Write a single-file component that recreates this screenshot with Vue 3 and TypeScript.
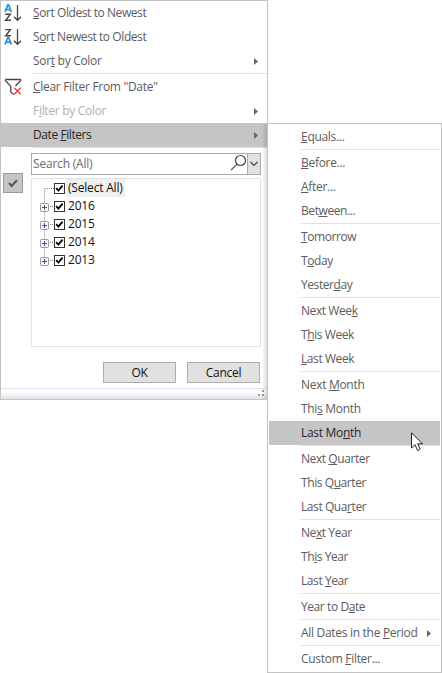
<script setup lang="ts">
interface Item {
  label: string
  at: number
  arrow?: boolean
  active?: boolean
  disabled?: boolean
  icon?: 'az' | 'za' | 'clear'
  tight?: boolean
}

// Splits a label around its access key; `at` is the index of that letter.
const parts = (i: Item): [string, string, string] => [
  i.label.slice(0, i.at),
  i.label.slice(i.at, i.at + 1),
  i.label.slice(i.at + 1),
]

const sortGroup: Item[] = [
  { label: 'Sort Oldest to Newest', at: 0, icon: 'az', tight: true },
  { label: 'Sort Newest to Oldest', at: 1, icon: 'za', tight: true },
  { label: 'Sort by Color', at: 3, arrow: true },
]
const filterGroup: Item[] = [
  { label: 'Clear Filter From "Date"', at: 0, icon: 'clear' },
  { label: 'Filter by Color', at: 1, arrow: true, disabled: true },
  { label: 'Date Filters', at: 5, arrow: true, active: true, tight: true },
]
const mainGroups: Item[][] = [sortGroup, filterGroup]

const subGroups: Item[][] = [
  [{ label: 'Equals...', at: 0 }],
  [{ label: 'Before...', at: 0 }, { label: 'After...', at: 0 }, { label: 'Between...', at: 3, tight: true }],
  [{ label: 'Tomorrow', at: 0, tight: true }, { label: 'Today', at: 1, tight: true }, { label: 'Yesterday', at: 6, tight: true }],
  [{ label: 'Next Week', at: 8, tight: true }, { label: 'This Week', at: 1, tight: true }, { label: 'Last Week', at: 0, tight: true }],
  [{ label: 'Next Month', at: 5 }, { label: 'This Month', at: 3 }, { label: 'Last Month', at: 7, active: true }],
  [{ label: 'Next Quarter', at: 5, tight: true }, { label: 'This Quarter', at: 6, tight: true }, { label: 'Last Quarter', at: 8, tight: true }],
  [{ label: 'Next Year', at: 2, tight: true }, { label: 'This Year', at: 2, tight: true }, { label: 'Last Year', at: 5, tight: true }],
  [{ label: 'Year to Date', at: 9, tight: true }],
  [{ label: 'All Dates in the Period', at: 17, arrow: true }],
  [{ label: 'Custom Filter...', at: 7 }],
]
const years: string[] = ['2016', '2015', '2014', '2013']
</script>

<template>
  <div class="stage">
    <div class="menu main">
      <div v-for="(g, gi) in mainGroups" :key="gi" class="group">
        <div v-for="i in g" :key="i.label" class="item" :class="{ active: i.active, disabled: i.disabled, tight: i.tight }">
          <span class="icon">
            <svg v-if="i.icon === 'az' || i.icon === 'za'" width="20" height="20" viewBox="0 0 20 20" fill="none">
              <g :class="i.icon === 'az' ? 'up' : 'down'">
                <path class="blue" d="M2 8.5 4.8 1.5h.8L8.4 8.5M3 6.2h4.4" />
              </g>
              <g :class="i.icon === 'az' ? 'down' : 'up'">
                <path class="ink" d="M2.3 2.2H7.4L2.6 8.3H7.9" />
              </g>
              <path class="shaft" d="M14.5 2v15M11 13.7l3.5 3.6 3.5-3.6" />
            </svg>
            <svg v-else-if="i.icon === 'clear'" width="20" height="20" viewBox="0 0 20 20" fill="none">
              <path class="funnel" d="M2.5 2.5h15v1.3l-5 5.2M2.5 2.5v1.3l5.3 5.6v5.8l3.2 2.3" />
              <path class="red" d="m11.3 10.8 6.4 6.4m0-6.4-6.4 6.4" />
            </svg>
          </span>
          <span class="label">{{ parts(i)[0] }}<u>{{ parts(i)[1] }}</u>{{ parts(i)[2] }}</span>
          <svg v-if="i.arrow" class="arrow" width="4" height="7" viewBox="0 0 4 7"><path d="M0 0 4 3.5 0 7z" /></svg>
        </div>
        <div class="rule"></div>
      </div>

      <div class="panel">
        <div class="gutter">
          <div class="toggle">
            <svg width="18" height="18" viewBox="0 0 18 18" fill="none"><path d="m5 9 2.6 3L13 6.2" /></svg>
          </div>
        </div>
        <div class="fields">
          <div class="search">
            <span class="hint">Search (All)</span>
            <svg width="17" height="18" viewBox="0 0 17 18" fill="none">
              <circle cx="10.5" cy="6.5" r="5" /><path d="m7 10.2-6 6" />
            </svg>
            <span class="drop"><svg width="12" height="19" viewBox="0 0 12 19" fill="none"><path d="m2.5 8 3.5 3.5L9.5 8" /></svg></span>
          </div>
          <div class="tree">
            <div class="node">
              <svg class="twig" width="16" height="18" viewBox="0 0 16 18" fill="none">
                <path class="dots" d="M4.5 9.5v9M5 9.5h11" />
              </svg>
              <svg class="box" width="11" height="11" viewBox="0 0 11 11"><rect x=".5" y=".5" width="10" height="10" /><path d="m2.2 5.2 2.2 2.4 4.2-5" /></svg>
              <span class="name picked">(Select All)</span>
            </div>
            <div v-for="(y, n) in years" :key="y" class="node">
              <svg class="twig" width="16" height="18" viewBox="0 0 16 18" fill="none">
                <path class="dots" :d="n < 3 ? 'M4.5 .5v18M10 9.5h6' : 'M4.5 .5v7M10 9.5h6'" />
                <rect class="plusbox" x=".5" y="6.5" width="8" height="8" rx="1" />
                <path class="plus" d="M2 10.5h5M4.5 8v5" />
              </svg>
              <svg class="box" width="11" height="11" viewBox="0 0 11 11"><rect x=".5" y=".5" width="10" height="10" /><path d="m2.2 5.2 2.2 2.4 4.2-5" /></svg>
              <span class="name">{{ y }}</span>
            </div>
          </div>
          <div class="buttons">
            <div class="button">OK</div>
            <div class="button">Cancel</div>
          </div>
        </div>
      </div>
      <div class="grip">
        <svg width="7" height="7" viewBox="0 0 7 7"><path d="M4 0h2v2H4zM0 4h2v2H0zM4 4h2v2H4z" /></svg>
      </div>
    </div>

    <div class="menu sub">
      <div v-for="(g, gi) in subGroups" :key="gi" class="group">
        <div v-for="i in g" :key="i.label" class="item" :class="{ active: i.active, tight: i.tight }">
          <span class="label">{{ parts(i)[0] }}<u>{{ parts(i)[1] }}</u>{{ parts(i)[2] }}</span>
          <svg v-if="i.arrow" class="arrow" width="4" height="7" viewBox="0 0 4 7"><path d="M0 0 4 3.5 0 7z" /></svg>
        </div>
        <div class="rule"></div>
      </div>
    </div>

    <svg class="pointer" width="14" height="20" viewBox="0 0 14 20">
      <path d="M.5 .8v15.2l3.5-3.4 2.5 5.7q1.7.7 2.6-1.1L6.7 11.8h4.8z" />
    </svg>
  </div>
</template>

<style>
body {
  background: #fff;
}
</style>

<style scoped>
.stage {
  position: relative;
  display: flex;
  align-items: flex-start;
  width: 442px;
  height: 673px;
  overflow: hidden;
  font-family: "Open Sans", "Noto Sans", sans-serif;
  font-size: 12px;
  letter-spacing: -0.3px;
  color: #5c5c5c;
}
.menu {
  box-sizing: border-box;
  border: 1px solid #c3c3c3;
  background: #fff;
}
.main {
  position: relative;
  width: 267px;
  height: 400px;
  flex: none;
  border-right: 0;
  display: flex;
  flex-direction: column;
}
/* Shade that the submenu casts on the menu beneath it. */
.main::after {
  content: "";
  position: absolute;
  right: 0;
  top: 123px;
  bottom: 0;
  width: 5px;
  background: linear-gradient(to right, rgba(0, 0, 0, 0), rgba(0, 0, 0, 0.13));
}
.sub {
  width: 175px;
  height: 550px;
  flex: none;
  margin-top: 123px;
  padding: 1px;
}
.stage::after {
  content: "";
  position: absolute;
  left: 267px;
  top: 0;
  width: 1px;
  height: 123px;
  background: #c3c3c3;
}
.item {
  display: flex;
  align-items: center;
  height: 24px;
}
.tight {
  letter-spacing: -0.42px;
}
.icon {
  width: 32px;
  height: 20px;
  padding-left: 2px;
  box-sizing: border-box;
  flex: none;
}
.icon svg {
  display: block;
}
.label {
  flex: 1;
  white-space: pre;
  line-height: 24px;
}
u {
  text-decoration: underline;
  text-decoration-thickness: 1px;
  text-underline-offset: 1px;
  text-decoration-skip-ink: none;
}
.sub .label {
  padding-left: 32px;
}
.arrow {
  margin-right: 9px;
  fill: #666;
}
.active {
  background: #c5c5c5;
  color: #262626;
}
.disabled .label {
  color: #b1b1b1;
}
.rule {
  height: 1px;
  margin: 0 0 1px 32px;
  background: #e1e1e1;
}
.sub .group:last-child .rule {
  display: none;
}
.up {
  transform: translateY(0.4px);
}
.down {
  transform: translateY(9px);
}
.blue {
  stroke: #2f8fd0;
  stroke-width: 1.7;
}
.ink {
  stroke: #444;
  stroke-width: 1.4;
}
.shaft,
.funnel {
  stroke: #444;
  stroke-width: 1.3;
}
.red {
  stroke: #e8483f;
  stroke-width: 1.6;
}
.panel {
  display: flex;
  padding-top: 4px;
  height: 235px;
  box-sizing: border-box;
}
.gutter {
  width: 30px;
  padding: 20px 0 0 2px;
  box-sizing: border-box;
}
.toggle {
  width: 18px;
  height: 18px;
  border: 1px solid #9a9a9a;
  background: #c5c5c5;
}
.toggle svg {
  display: block;
}
.toggle path {
  stroke: #555;
  stroke-width: 2;
}
.fields {
  width: 230px;
}
.search {
  box-sizing: border-box;
  display: flex;
  height: 22px;
  border: 1px solid #ababab;
  background: #fff;
}
.hint {
  flex: 1;
  line-height: 19px;
  padding-left: 1px;
  letter-spacing: -0.2px;
  color: #6b6b6b;
}
.search svg {
  display: block;
  stroke: #444;
  stroke-width: 1.2;
}
.drop {
  width: 12px;
  background: #e1e1e1;
  border-left: 1px solid #ababab;
}
.tree {
  box-sizing: border-box;
  height: 169px;
  margin-top: 3px;
  border: 1px solid #e1e1e4;
  background: #fff;
  color: #111;
}
.node {
  display: flex;
  align-items: center;
  height: 18px;
  padding-left: 8px;
}
.twig {
  margin-right: -2px;
}
.dots {
  stroke: #888;
  stroke-dasharray: 1 1;
}
.plusbox {
  fill: #f8f8f8;
  stroke: #999;
}
.plus {
  stroke: #3455a4;
}
.box {
  position: relative;
}
.box rect {
  fill: #fff;
  stroke: #333;
}
.box path {
  fill: none;
  stroke: #000;
  stroke-width: 1.8;
}
.name {
  line-height: 18px;
  padding: 0 2px;
  margin-left: 1px;
  letter-spacing: -0.2px;
}
.picked {
  background: #f0f0f0;
}
.buttons {
  display: flex;
  justify-content: flex-end;
  gap: 11px;
  margin: 15px 1px 0 0;
}
.button {
  box-sizing: border-box;
  width: 73px;
  height: 21px;
  border: 1px solid #adadad;
  background: #e1e1e1;
  color: #111;
  text-align: center;
  line-height: 20px;
}
.grip {
  display: flex;
  justify-content: flex-end;
  align-items: flex-end;
  flex: 1;
  margin-top: 4px;
  padding: 0 2px 2px 0;
  border-top: 1px solid #dbe7f2;
  background: linear-gradient(#fff 30%, #e0e1e4);
}
.grip svg {
  fill: #999;
}
.pointer {
  position: absolute;
  left: 411px;
  top: 432px;
  fill: #fff;
  stroke: #222;
}
</style>
